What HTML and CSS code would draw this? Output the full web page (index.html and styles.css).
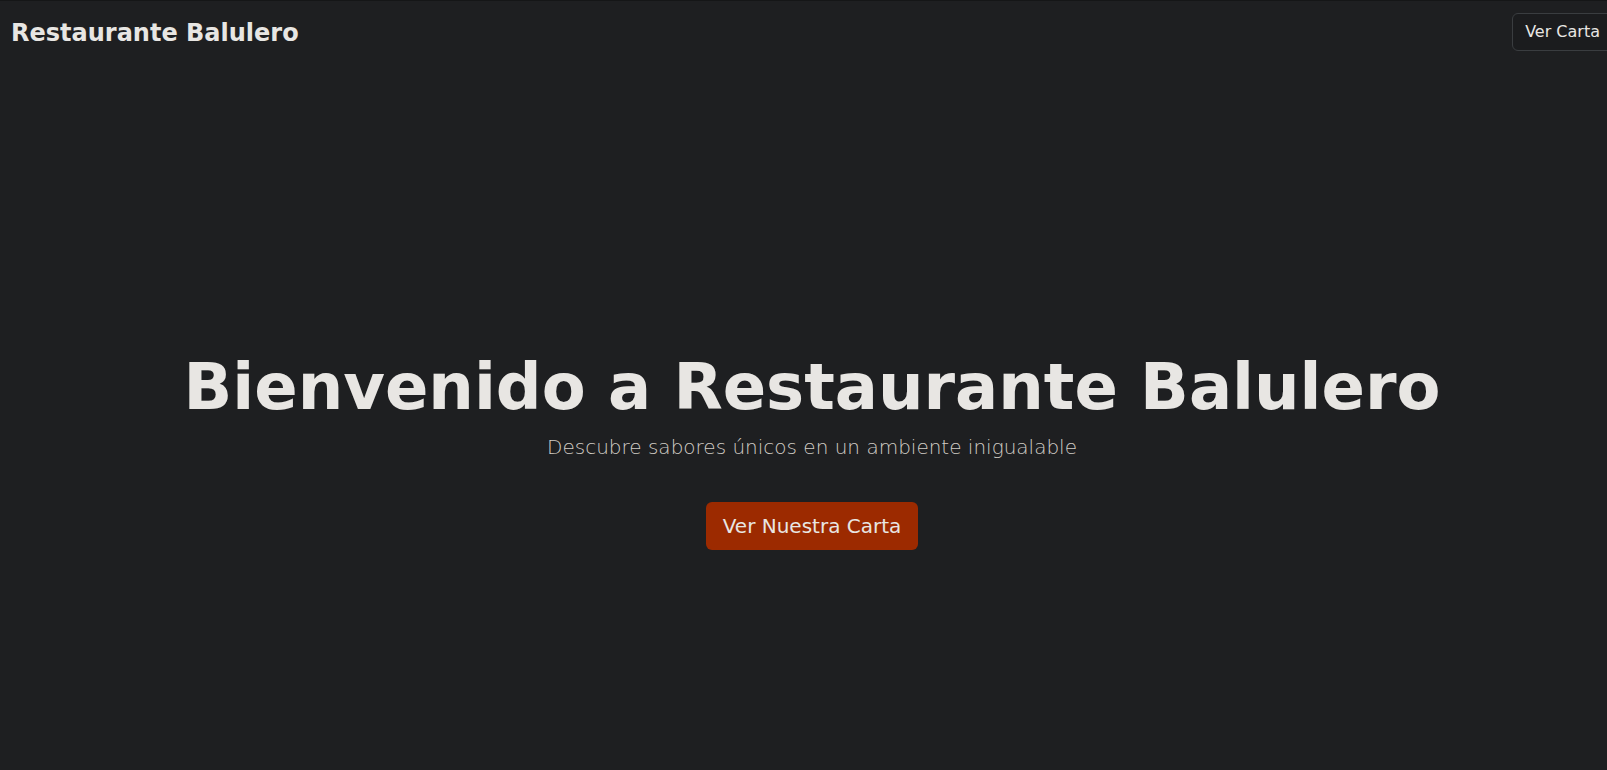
FILE: index.html
```html
<!DOCTYPE html>
<html lang="es">
<head>
<meta charset="utf-8">
<title>Restaurante Balulero</title>
<link rel="stylesheet" href="styles.css">
</head>
<body>
<div class="page">
  <header class="nav">
    <a class="brand" href="#">Restaurante Balulero</a>
    <a class="nav-btn" href="#">Ver Carta</a>
  </header>
  <main class="hero">
    <h1 class="hero-title">Bienvenido a Restaurante Balulero</h1>
    <p class="hero-sub">Descubre sabores únicos en un ambiente inigualable</p>
    <a class="hero-btn" href="#">Ver Nuestra Carta</a>
  </main>
</div>
</body>
</html>
```
FILE: styles.css
```css
html, body {
  margin: 0;
  padding: 0;
  height: 100%;
  background: #1e1f21;
  overflow: hidden;
}
body {
  font-family: "DejaVu Sans", sans-serif;
  color: #e8e6e3;
  border-top: 1px solid #151617;
  box-sizing: border-box;
}
.page {
  width: 1624px;
}
.nav {
  display: flex;
  justify-content: space-between;
  align-items: center;
  padding: 12px 0 0 11px;
  width: 1613px;
  box-sizing: border-box;
}
.brand {
  color: #e8e6e3;
  text-decoration: none;
  font-weight: bold;
  font-size: 24px;
  position: relative;
  top: 1px;
}
.nav-btn {
  color: #e8e6e3;
  text-decoration: none;
  font-size: 16px;
  padding: 8px 12px 9px;
  border: 1px solid #3a3d40;
  border-radius: 6px;
  background: #1b1c1e;
}
.hero {
  display: flex;
  flex-direction: column;
  align-items: center;
  padding-top: 298px;
}
.hero-title {
  margin: 0;
  font-size: 64px;
  font-weight: bold;
  line-height: 1.2;
}
.hero-sub {
  margin: 9px 0 0;
  font-size: 20px;
  font-weight: 200;
  color: #d2cdc6;
}
.hero-btn {
  margin-top: 43px;
  background: #9c2a00;
  color: #e8e6e3;
  text-decoration: none;
  font-size: 20px;
  padding: 12px 17px;
  border-radius: 6px;
}
```
